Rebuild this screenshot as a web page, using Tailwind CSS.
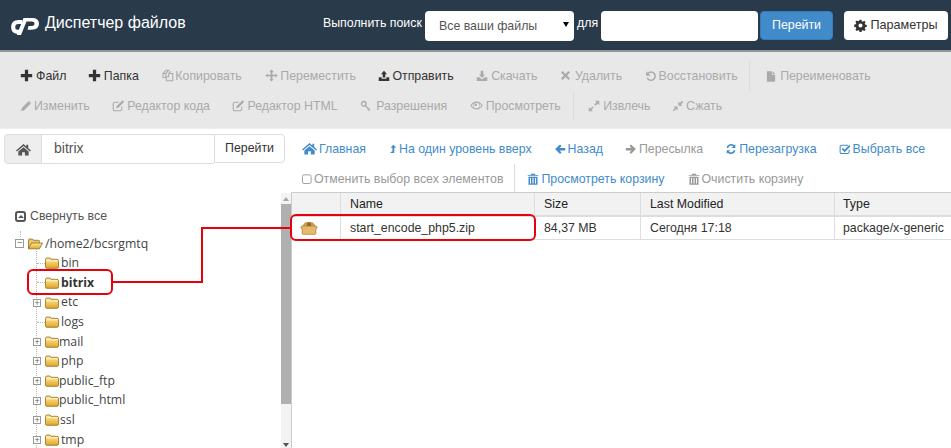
<!DOCTYPE html>
<html><head><meta charset="utf-8"><script src="https://cdn.jsdelivr.net/npm/@tailwindcss/browser@4"></script></head>
<body class="relative w-[951px] h-[448px] overflow-hidden bg-white font-['Liberation_Sans',Arial,sans-serif] text-[12.35px] text-[#333]">
<svg class="absolute w-0 h-0">
<defs>
<linearGradient id="fg" x1="0" y1="0" x2="0" y2="1"><stop offset="0" stop-color="#fdeb9f"/><stop offset="1" stop-color="#e2a526"/></linearGradient>
<symbol id="plus" viewBox="0 0 16 16"><path d="M6 1h4v5h5v4h-5v5H6v-5H1V6h5z"/></symbol>
<symbol id="copy" viewBox="0 0 16 16"><path fill="none" stroke="currentColor" stroke-width="1.300" d="M6 1.500h3.500L6 5.500H2.500L6 1.500zM6 5.500v5H2.500V5.500M9.500 5.500h5v9h-8v-4M9.500 5.500V9.500H6.500M9.500 5.500L12 3"/></symbol>
<symbol id="move" viewBox="0 0 16 16"><path d="M8 .5l2.800 2.800H9.200V7h3.500V5.400L15.500 8l-2.800 2.700V9H9.200v3.700h1.600L8 15.500l-2.800-2.800h1.600V9H3.300v1.700L.5 8l2.800-2.600V7h3.500V3.300H5.200z"/></symbol>
<symbol id="upload" viewBox="0 0 16 16"><path d="M8 1l4 4.500H9.700V10H6.300V5.500H4zM1 9.500h3.800v2h6.400v-2H15V14.500H1z"/></symbol>
<symbol id="download" viewBox="0 0 16 16"><path d="M6.300 1h3.400v5H12L8 10.500 4 6h2.300zM1 9.500h3.500L8 12.500l3.500-3H15v5H1z"/></symbol>
<symbol id="times" viewBox="0 0 16 16"><path d="M3.800 1.500L8 5.700l4.200-4.200 2.300 2.300L10.300 8l4.200 4.200-2.300 2.300L8 10.300l-4.200 4.200-2.300-2.300L5.700 8 1.500 3.800z"/></symbol>
<symbol id="undo" viewBox="0 0 16 16"><path fill="none" stroke="currentColor" stroke-width="2" d="M4 4.500A5.500 5.500 0 1 1 3 10.500"/><path d="M1.500 1.500v6h6z"/></symbol>
<symbol id="file" viewBox="0 0 16 16"><path d="M2.500 1H9v4.500h4.500V15h-11zM10 1l3.500 3.500H10z"/></symbol>
<symbol id="pencil" viewBox="0 0 16 16"><path d="M11 2l3 3-8.500 8.500-4 1 1-4zM12 1l3 3-.5.500-3-3z"/></symbol>
<symbol id="edit" viewBox="0 0 16 16"><path fill="none" stroke="currentColor" stroke-width="1.300" d="M12 9.500v3a2 2 0 0 1-2 2H3.500a2 2 0 0 1-2-2V6a2 2 0 0 1 2-2h5"/><path d="M13 1.500l2 2-7 7-3 1 1-3z"/></symbol>
<symbol id="key" viewBox="0 0 16 16"><path fill="none" stroke="currentColor" stroke-width="1.800" d="M5 2a3 3 0 1 1 0 6 3 3 0 1 1 0-6zM7 7.500l6 5.500M11 11l-1.500 1.500M13 13l-1.500 1.500"/></symbol>
<symbol id="eye" viewBox="0 0 16 16"><path fill-rule="evenodd" d="M8 3c3.500 0 6 2.500 7.500 5C14 10.500 11.500 13 8 13S2 10.500.5 8C2 5.500 4.500 3 8 3zm0 1.500a3.500 3.500 0 1 0 0 7 3.500 3.500 0 0 0 0-7zM2 8c.7 1 1.500 2 2.500 2.700A5 5 0 0 1 4.500 5.300C3.500 6 2.700 7 2 8zm9.500-2.700a5 5 0 0 1 0 5.400C12.500 10 13.300 9 14 8c-.7-1-1.500-2-2.500-2.700z"/><circle cx="7" cy="7" r="1.500"/></symbol>
<symbol id="expand" viewBox="0 0 16 16"><path d="M9.500 1H15v5.500l-2-2-3 3L8.500 6l3-3zM6.500 15H1V9.500l2 2 3-3L7.500 10l-3 3z"/></symbol>
<symbol id="compress" viewBox="0 0 16 16"><path d="M8.500 7.500V2l2 2 3-3L15 2.500l-3 3 2 2zM7.500 8.500V14l-2-2-3 3L1 13.500l3-3-2-2z"/></symbol>
<symbol id="cog" viewBox="0 0 16 16"><path fill-rule="evenodd" d="M6.800.8h2.400l.4 2 1.300.5 1.700-1.100 1.700 1.700-1.100 1.700.5 1.300 2 .4v2.400l-2 .4-.5 1.300 1.100 1.700-1.700 1.700-1.700-1.100-1.300.5-.4 2H6.800l-.4-2-1.300-.5-1.700 1.100-1.700-1.700 1.100-1.700-.5-1.300-2-.4V6.800l2-.4.5-1.300-1.100-1.700 1.700-1.700 1.700 1.100 1.300-.5zM8 5.500a2.500 2.500 0 1 0 0 5 2.500 2.500 0 0 0 0-5z"/></symbol>
<symbol id="home" viewBox="0 0 16 16"><path d="M8 2l3 2.700V3h2v3.500L16 9l-1 1.100L8 4.200 1 10.100 0 9zM8 5.500l5.500 4.600V14.500H9.500V11h-3v3.500H2.500v-4.400z"/></symbol>
<symbol id="levelup" viewBox="0 0 16 16"><path d="M8.500 1L13 6h-3v8.500H3.500L5 12.500h2V6H4z"/></symbol>
<symbol id="left" viewBox="0 0 16 16"><path d="M8 2l2 2-2.500 2.500H15v3.500H7.500L10 12.500l-2 2L1.500 8z"/></symbol>
<symbol id="right" viewBox="0 0 16 16"><path d="M8 2L6 4l2.500 2.500H1V10h7.500L6 12.500l2 2L14.500 8z"/></symbol>
<symbol id="refresh" viewBox="0 0 16 16"><path d="M13.800 1.500v5H9l1.900-1.900A4 4 0 0 0 4.300 6.500H2A6.300 6.300 0 0 1 12.400 3zM2.200 14.500v-5H7l-1.900 1.900a4 4 0 0 0 6.600-1.900H14A6.300 6.300 0 0 1 3.600 13z"/></symbol>
<symbol id="check" viewBox="0 0 16 16"><path fill="none" stroke="currentColor" stroke-width="1.400" d="M13.500 9v3a2 2 0 0 1-2 2h-8a2 2 0 0 1-2-2V5a2 2 0 0 1 2-2h8.500"/><path fill="none" stroke="currentColor" stroke-width="2.400" d="M4.500 7.500l3 3 7-7"/></symbol>
<symbol id="square" viewBox="0 0 16 16"><rect x="2" y="2.500" width="11.500" height="11.500" rx="2" fill="none" stroke="currentColor" stroke-width="1.200"/></symbol>
<symbol id="trash" viewBox="0 0 16 16"><path fill-rule="evenodd" d="M5.500 1h5l.7 1.500H15v1.300H1V2.500h3.800zM2 5h12v10.500H2zm2 1.500v7.500h1.300V6.500zm3.300 0v7.500h1.400V6.500zm3.400 0v7.500H12V6.500z"/></symbol>
<symbol id="folder" viewBox="0 0 14 12"><path fill="url(#fg)" stroke="#8f6d20" stroke-width=".8" d="M.5 2.500q0-1.500 1.500-1.500h3l1 1.300h6q1.500 0 1.500 1.500v6q0 1.500-1.500 1.500H2Q.5 11.300.5 9.800z"/><path fill="#fff6c8" d="M1.200 3.300h11.600v1H1.200z"/></symbol>
<symbol id="fopen" viewBox="0 0 15 12"><path fill="#e9c56d" stroke="#8f6d20" stroke-width=".8" d="M.5 10.800V2q0-1 1-1h3l1 1.300h5q1 0 1 1v1.500"/><path fill="url(#fg)" stroke="#8f6d20" stroke-width=".8" d="M.5 10.800L3.500 5h11l-3 5.800z"/></symbol>
</defs>
</svg>

<header class="h-[52px] bg-[#293a4b] border-b-2 border-[#8d959d] flex items-center text-white">
  <svg class="ml-[11px] w-[28px] h-[18px] mt-[2px] shrink-0" viewBox="0 0 28 18"><path fill="none" stroke="#fff" stroke-width="4.200" d="M11 5H7.500Q2.200 5 2.200 10T6.500 14.800H8"/><path fill="#fff" d="M12.500 1H21q7 0 7 5.800T20.500 12.800H16.500L17.500 9H20.500q3 0 3-2.200t-2.800-2.300H15.500L10 18H5.800z"/></svg>
  <span class="ml-[6px] w-[278px] shrink-0 text-[16px] mt-[-4px] whitespace-nowrap">Диспетчер файлов</span>
  <span class="mt-[-4px] whitespace-nowrap w-[94px] shrink-0">Выполнить поиск</span>
  <div class="relative ml-[8px] w-[149px] shrink-0 h-[30px] rounded-[4px] bg-white text-[#555] pl-[14px] leading-[30px] mt-[1px]">Все ваши файлы<span class="absolute right-[5px] top-[11px] w-0 h-0 border-x-[3px] border-x-transparent border-t-[5px] border-t-black"></span></div>
  <span class="ml-[3px] mt-[-3px] w-[21px] shrink-0">для</span>
  <div class="ml-[3px] w-[157px] shrink-0 h-[30px] rounded-[4px] bg-white mt-[1px]"></div>
  <div class="ml-[2px] w-[73px] shrink-0 h-[29px] rounded-[4px] bg-[#428bca] border border-[#357ebd] leading-[27px] text-center">Перейти</div>
  <div class="ml-[11px] w-[104px] shrink-0 h-[29px] rounded-[4px] bg-white text-[#333] text-[12.6px] flex items-center justify-center gap-[3px]"><svg class="w-[13px] h-[13px] fill-current"><use href="#cog"/></svg>Параметры</div>
</header>

<section class="h-[77px] bg-[#e8e8e8] border-b border-[#eee] pl-[20px] pt-[9px] text-[#aaa]">
  <div class="flex items-center h-[30px] gap-[22.500px]">
    <span class="flex items-center gap-[3px] text-[#333]"><svg class="w-[13px] h-[13px] fill-current"><use href="#plus"/></svg>Файл</span>
    <span class="flex items-center gap-[3px] text-[#333] ml-[-1px]"><svg class="w-[13px] h-[13px] fill-current"><use href="#plus"/></svg>Папка</span>
    <span class="flex items-center gap-[1px]"><svg class="w-[13px] h-[13px] fill-current"><use href="#copy"/></svg>Копировать</span>
    <span class="flex items-center gap-[2px] ml-[1px]"><svg class="w-[13px] h-[13px] fill-current"><use href="#move"/></svg>Переместить</span>
    <span class="flex items-center gap-[2px] text-[#333]"><svg class="w-[12px] h-[12px] fill-current"><use href="#upload"/></svg>Отправить</span>
    <span class="flex items-center gap-[3px]"><svg class="w-[12px] h-[12px] fill-current"><use href="#download"/></svg>Скачать</span>
    <span class="flex items-center gap-[4px]"><svg class="w-[11px] h-[11px] fill-current"><use href="#times"/></svg>Удалить</span>
    <span class="flex items-center gap-[2px]"><svg class="w-[12px] h-[12px] fill-current"><use href="#undo"/></svg>Восстановить</span>
    <span class="flex items-center gap-[3px] border-l border-[#ddd] pl-[15px] ml-[-11px] h-[30px]"><svg class="w-[12px] h-[13px] fill-current"><use href="#file"/></svg>Переименовать</span>
  </div>
  <div class="flex items-center h-[30px] gap-[22.500px]">
    <span class="flex items-center gap-[2px]"><svg class="w-[12px] h-[12px] fill-current"><use href="#pencil"/></svg>Изменить</span>
    <span class="flex items-center gap-[2px]"><svg class="w-[13px] h-[13px] fill-current"><use href="#edit"/></svg>Редактор кода</span>
    <span class="flex items-center gap-[2px]"><svg class="w-[13px] h-[13px] fill-current"><use href="#edit"/></svg>Редактор HTML</span>
    <span class="flex items-center gap-[4px]"><svg class="w-[12px] h-[12px] fill-current"><use href="#key"/></svg>Разрешения</span>
    <span class="flex items-center gap-[3px]"><svg class="w-[13px] h-[13px] fill-current"><use href="#eye"/></svg>Просмотреть</span>
    <span class="flex items-center gap-[3px] border-l border-[#ddd] pl-[14px] ml-[-10px] h-[30px]"><svg class="w-[12px] h-[12px] fill-current"><use href="#expand"/></svg>Извлечь</span>
    <span class="flex items-center gap-[2px] ml-[-1px]"><svg class="w-[12px] h-[12px] fill-current"><use href="#compress"/></svg>Сжать</span>
  </div>
</section>

<main class="flex h-[319px]">
  <aside class="w-[291px] shrink-0 flex flex-col">
    <div class="ml-[4px] mt-[5px] w-[281px] h-[30px] flex">
      <div class="w-[38px] bg-[#eee] border border-[#ddd] rounded-l-[4px] flex items-center justify-center text-[#555]"><svg class="w-[15px] h-[15px] fill-current"><use href="#home"/></svg></div>
      <div class="w-[172px] border-y border-[#ddd] pl-[12px] text-[14px] leading-[27px] text-[#555]">bitrix</div>
      <div class="w-[71px] h-[29px] border border-[#ddd] rounded-r-[4px] text-center leading-[27px]">Перейти</div>
    </div>
    <div class="flex flex-1 mt-[29px] h-[256px] overflow-hidden">
      <div class="w-[281px] pl-[15px] font-['Open_Sans',sans-serif] text-[12.25px] text-[#444]">
        <div class="flex items-center gap-[4px] h-[20px] mt-[13px] font-['Liberation_Sans',sans-serif] text-[12.35px] text-[#555]"><span class="w-[11px] h-[11px] rounded-[3px] border-2 border-[#555] flex items-center justify-center"><span class="w-0 h-0 border-x-[3px] border-x-transparent border-b-[3px] border-b-[#555]"></span></span>Свернуть все</div>
        <div class="relative mt-[8px]">
          <div class="absolute left-[21px] top-[13px] h-[205px] border-l border-dotted border-[#bbb]"></div>
          <div class="absolute left-[5px] top-[-3px] h-[6px] border-l border-dotted border-[#bbb]"></div>
          <div class="flex items-center h-[19.6px]"><span class="w-[9px] h-[9px] border border-[#999] bg-white text-[9px] leading-[6px] text-center text-[#555] shrink-0">−</span><svg class="ml-[4px] w-[15px] h-[12px] shrink-0"><use href="#fopen"/></svg><span class="ml-[2px]">/home2/bcsrgmtq</span></div>
          <div class="flex items-center h-[19.6px] pl-[22px]"><span class="w-[8px] border-t border-dotted border-[#bbb]"></span><svg class="w-[14px] h-[12px]"><use href="#folder"/></svg><span class="ml-[2px]">bin</span></div>
          <div class="flex items-center h-[19.6px] pl-[22px]"><span class="w-[8px] border-t border-dotted border-[#bbb]"></span><svg class="w-[14px] h-[12px]"><use href="#folder"/></svg><span class="ml-[2px] font-bold text-[#333]">bitrix</span></div>
          <div class="flex items-center h-[19.6px] pl-[18px]"><span class="relative z-10 w-[8px] h-[8px] border border-[#999] bg-white text-[9px] leading-[6px] text-center text-[#555] mr-[4px]">+</span><svg class="w-[14px] h-[12px]"><use href="#folder"/></svg><span class="ml-[2px]">etc</span></div>
          <div class="flex items-center h-[19.6px] pl-[22px]"><span class="w-[8px] border-t border-dotted border-[#bbb]"></span><svg class="w-[14px] h-[12px]"><use href="#folder"/></svg><span class="ml-[2px]">logs</span></div>
          <div class="flex items-center h-[19.6px] pl-[18px]"><span class="relative z-10 w-[8px] h-[8px] border border-[#999] bg-white text-[9px] leading-[6px] text-center text-[#555] mr-[4px]">+</span><svg class="w-[14px] h-[12px]"><use href="#folder"/></svg><span>mail</span></div>
          <div class="flex items-center h-[19.6px] pl-[18px]"><span class="relative z-10 w-[8px] h-[8px] border border-[#999] bg-white text-[9px] leading-[6px] text-center text-[#555] mr-[4px]">+</span><svg class="w-[14px] h-[12px]"><use href="#folder"/></svg><span class="ml-[2px]">php</span></div>
          <div class="flex items-center h-[19.6px] pl-[18px]"><span class="relative z-10 w-[8px] h-[8px] border border-[#999] bg-white text-[9px] leading-[6px] text-center text-[#555] mr-[4px]">+</span><svg class="w-[14px] h-[12px]"><use href="#folder"/></svg><span>public_ftp</span></div>
          <div class="flex items-center h-[19.6px] pl-[18px]"><span class="relative z-10 w-[8px] h-[8px] border border-[#999] bg-white text-[9px] leading-[6px] text-center text-[#555] mr-[4px]">+</span><svg class="w-[14px] h-[12px]"><use href="#folder"/></svg><span>public_html</span></div>
          <div class="flex items-center h-[19.6px] pl-[18px]"><span class="relative z-10 w-[8px] h-[8px] border border-[#999] bg-white text-[9px] leading-[6px] text-center text-[#555] mr-[4px]">+</span><svg class="w-[14px] h-[12px]"><use href="#folder"/></svg><span class="ml-[1px]">ssl</span></div>
          <div class="flex items-center h-[19.6px] pl-[18px]"><span class="relative z-10 w-[8px] h-[8px] border border-[#999] bg-white text-[9px] leading-[6px] text-center text-[#555] mr-[4px]">+</span><svg class="w-[14px] h-[12px]"><use href="#folder"/></svg><span class="ml-[2px]">tmp</span></div>
        </div>
      </div>
      <div class="relative w-[10px] bg-[#f3f3f3]">
        <span class="absolute top-[4px] left-[2px] w-0 h-0 border-x-[3px] border-x-transparent border-b-[4px] border-b-[#a5a5a5]"></span>
        <div class="mt-[11px] h-[200px] bg-[#b0b0b0]"></div>
        <span class="absolute bottom-[1px] left-[2px] w-0 h-0 border-x-[3px] border-x-transparent border-t-[4px] border-t-[#555]"></span>
      </div>
    </div>
  </aside>

  <div class="flex-1 min-w-0">
    <div class="pl-[11px] text-[#428bca]">
      <div class="flex items-center h-[30px] mt-[5px] gap-[22px]">
        <span class="flex items-center gap-[2px]"><svg class="w-[15px] h-[15px] fill-current"><use href="#home"/></svg>Главная</span>
        <span class="flex items-center gap-[1px]"><svg class="w-[10px] h-[12px] fill-current"><use href="#levelup"/></svg>На один уровень вверх</span>
        <span class="flex items-center gap-[2px]"><svg class="w-[12px] h-[12px] fill-current"><use href="#left"/></svg>Назад</span>
        <span class="flex items-center gap-[2px] text-[#999]"><svg class="w-[12px] h-[12px] fill-current"><use href="#right"/></svg>Пересылка</span>
        <span class="flex items-center gap-[2px]"><svg class="w-[12px] h-[12px] fill-current"><use href="#refresh"/></svg>Перезагрузка</span>
        <span class="flex items-center gap-[2px]"><svg class="w-[12px] h-[12px] fill-current"><use href="#check"/></svg>Выбрать все</span>
      </div>
      <div class="flex items-center h-[30px] gap-[23px] ml-[-1px]">
        <span class="flex items-center gap-[1px] text-[#999]"><svg class="w-[12px] h-[12px] fill-current"><use href="#square"/></svg>Отменить выбор всех элементов</span>
        <span class="flex items-center gap-[2px] border-l border-[#ddd] pl-[12px] ml-[-12px] h-[30px]"><svg class="w-[12px] h-[14px] fill-current"><use href="#trash"/></svg>Просмотреть корзину</span>
        <span class="flex items-center gap-[2px] text-[#999]"><svg class="w-[12px] h-[14px] fill-current"><use href="#trash"/></svg>Очистить корзину</span>
      </div>
    </div>
    <div class="mt-[-2px] h-[256px] border-l border-[#ccc]">
      <div class="grid grid-cols-[48px_194px_106px_194px_117px] border-t border-[#ccc] border-b-2 border-b-[#ddd] bg-[#f2f2f2] h-[25px] text-[#222] leading-[22px]">
        <div></div>
        <div class="border-l border-[#ddd] pl-[9px]">Name</div>
        <div class="border-l border-[#ddd] pl-[9px]">Size</div>
        <div class="border-l border-[#ddd] pl-[9px]">Last Modified</div>
        <div class="border-l border-[#ddd] pl-[8px]">Type</div>
      </div>
      <div class="grid grid-cols-[48px_194px_106px_194px_117px] border-b border-[#ddd] h-[23px] leading-[22px]">
        <div class="flex items-center justify-center pr-[15px]"><svg class="w-[18px] h-[14px]" viewBox="0 0 17 13"><path fill="#c99a4b" d="M2 4.500L5 1h7l3 3.500z"/><path fill="#8d6a2c" d="M7 1h3l.5 3.500h-4z"/><path fill="#e8b868" stroke="#9a7432" stroke-width=".6" d="M1 5h15v1.500q0 .5-1 .5v4.500q0 1-1 1H3q-1 0-1-1V7q-1 0-1-.5z"/></svg></div>
        <div class="border-l border-[#ddd] pl-[9px]">start_encode_php5.zip</div>
        <div class="border-l border-[#ddd] pl-[9px]">84,37 MB</div>
        <div class="border-l border-[#ddd] pl-[9px]">Сегодня 17:18</div>
        <div class="border-l border-[#ddd] pl-[8px]">package/x-generic</div>
      </div>
    </div>
  </div>
</main>

<div class="absolute left-[27px] top-[269px] w-[86px] h-[26px] rounded-[6px] border-2 border-[#e8000d]"></div>
<div class="absolute left-[290px] top-[214px] w-[246px] h-[27px] rounded-[6px] border-2 border-[#e8000d]"></div>
<div class="absolute left-[201px] top-[227px] w-[90px] h-[2px] bg-[#e8000d]"></div>
<div class="absolute left-[201px] top-[227px] w-[2px] h-[56px] bg-[#e8000d]"></div>
<div class="absolute left-[112px] top-[281px] w-[91px] h-[2px] bg-[#e8000d]"></div>
</body></html>
